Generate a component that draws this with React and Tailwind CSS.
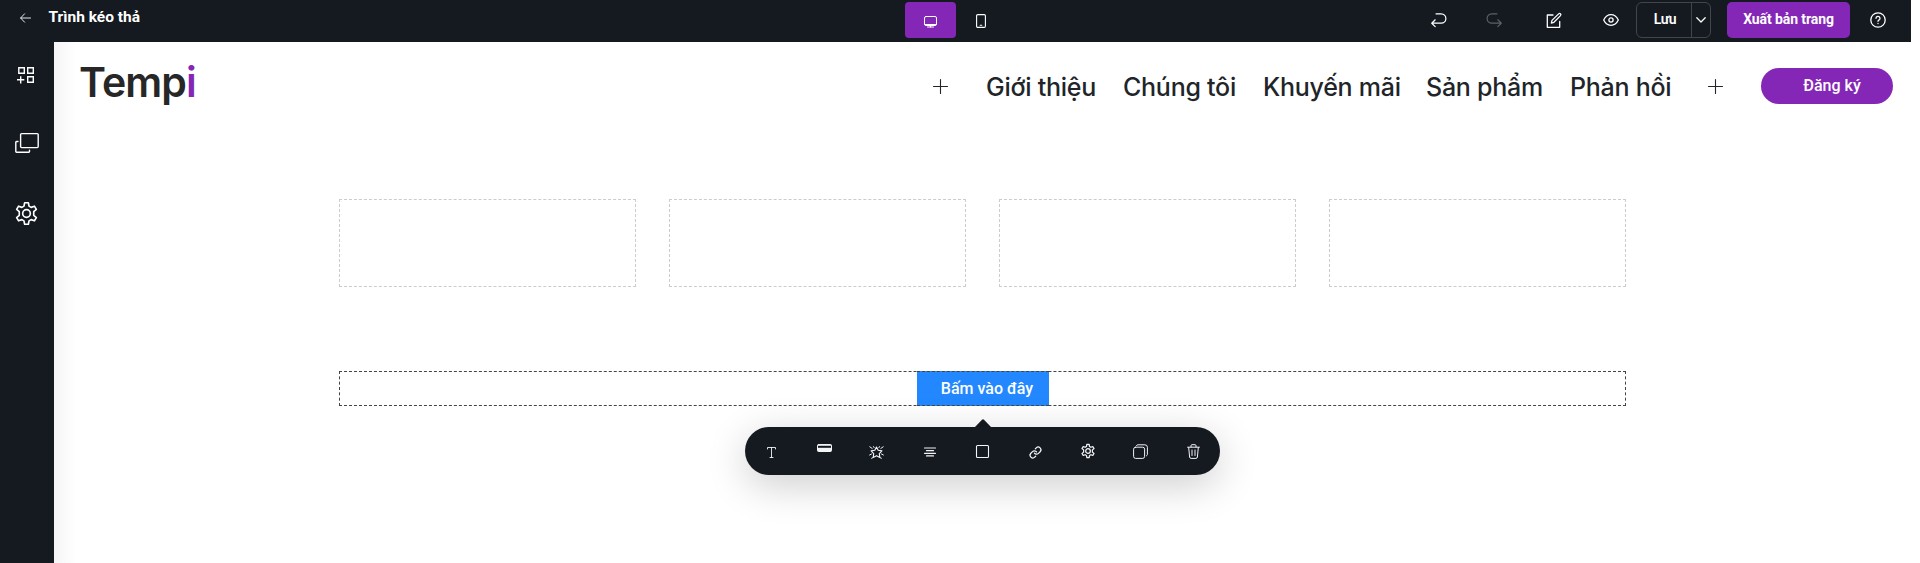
import React from "react";

function Icon({ vb = "0 0 24 24", className = "", sw = 1.5, children }) {
  return (
    <svg
      viewBox={vb}
      className={"shrink-0 overflow-visible " + className}
      fill="none"
      stroke="currentColor"
      strokeWidth={sw}
      strokeLinecap="round"
      strokeLinejoin="round"
    >
      {children}
    </svg>
  );
}

const GEAR =
  "M10.3 2.2h3.4l.6 3.1 1.9 1.1 3-1.1 1.8 3-2.4 2v3.4l2.4 2-1.8 3-3-1.1-1.9 1.1-.6 3.1h-3.4l-.6-3.1-1.9-1.1-3 1.1-1.8-3 2.4-2v-3.4l-2.4-2 1.8-3 3 1.1 1.9-1.1z";

function TopBar() {
  return (
    <header className="flex h-[42px] w-[1911px] items-start bg-[#151920] text-white">
      <div className="flex h-9 w-[905px] items-center pl-5">
        <Icon vb="0 0 11 10" sw={1} className="h-2.5 w-[11px] text-gray-200">
          <path d="M10.5 5H.7M4.6.8.6 5l4 4.2" />
        </Icon>
        <h1 className="ml-[17.5px] mb-0.5 text-[15.5px] leading-5 font-bold whitespace-nowrap">Trình kéo thả</h1>
      </div>
      <div className="mt-0.5 flex w-[526px]">
        <button className="flex h-9 w-[51px] items-center justify-center rounded-sm bg-[#8427b7]">
          <Icon vb="0 0 13 12" sw={1} className="mt-1 h-3 w-[13px]">
            <rect x=".5" y=".5" width="12" height="9" rx="1.5" />
            <path d="M1 8.5h11M3.5 11h6M6.5 9v2" />
          </Icon>
        </button>
        <button className="flex h-9 w-[50px] items-center justify-center">
          <Icon vb="0 0 10 14" sw={1.1} className="mt-[2px] h-[14px] w-2.5">
            <rect x=".6" y=".6" width="8.8" height="12.8" rx="1.2" />
            <path d="M4.2 11.3h1.6" />
          </Icon>
        </button>
      </div>
      <div className="flex h-10 items-center">
        <Icon vb="0 0 16 14" sw={1.2} className="h-[14px] w-4">
          <path d="M5 .8h5.2a4.7 4.7 0 0 1 0 9.4H.8M4.2 6.8.7 10.2l3.5 3.4" />
        </Icon>
        <Icon vb="0 0 16 14" sw={1.2} className="ml-[39px] h-[14px] w-4 text-[#5c6068]">
          <path d="M11 .8H5.8a4.7 4.7 0 0 0 0 9.4h9.4M11.8 6.8l3.5 3.4-3.5 3.4" />
        </Icon>
        <Icon vb="0 0 16 15" sw={1.3} className="ml-[44px] h-[15px] w-4">
          <path d="M7 2H1.3v12.3h12.4V8.5M12.6.9a1.2 1.2 0 0 1 1.9 1.7L7.9 9.3l-2.6.8.7-2.7z" />
        </Icon>
        <Icon vb="0 0 16 12" sw={1.3} className="ml-[41px] h-3 w-4">
          <path d="M.7 6C2.3 2.6 4.9.7 8 .7S13.7 2.6 15.3 6c-1.6 3.4-4.2 5.3-7.3 5.3S2.3 9.4.7 6z" />
          <circle cx="8" cy="6" r="2.1" />
        </Icon>
      </div>
      <div className="mt-0.5 ml-[17px] flex h-9 w-[75px] rounded-md border border-[#444548]">
        <span className="flex w-[55px] items-center justify-center border-r border-[#444548] pr-2 pl-0.5 text-sm font-semibold tracking-tight">
          <span className="-mt-0.5 ml-2">Lưu</span>
        </span>
        <span className="flex flex-1 items-center justify-center">
          <Icon vb="0 0 10 6" sw={1.3} className="h-1.5 w-2.5">
            <path d="M.8.8 5 5 9.2.8" />
          </Icon>
        </span>
      </div>
      <button className="mt-0.5 ml-4 flex h-9 w-[123px] items-center justify-center rounded-[5px] bg-[#8427b7] pb-0.5 text-sm font-bold tracking-[-0.1px] whitespace-nowrap">
        Xuất bản trang
      </button>
      <Icon vb="0 0 16 16" sw={1.3} className="mt-3 ml-[19.5px] h-4 w-4">
        <circle cx="8" cy="8" r="7.2" />
        <path d="M6 6.3a2 2 0 1 1 2.9 1.8c-.6.3-.9.6-.9 1.2M8 11.5v.1" />
      </Icon>
    </header>
  );
}

function SideBar() {
  return (
    <aside className="flex w-[54px] flex-col items-center bg-[#151920] pt-[25px] text-white">
      <Icon vb="0 0 17 17" sw={1.4} className="mr-[3px] h-[17px] w-[17px]">
        <g strokeLinejoin="miter" strokeLinecap="butt">
          <path d="M1.8.7h5.5v5.5H1.8zM10.7.7h5.6v5.5h-5.6zM10.7 9.7h5.6v5.6h-5.6zM0 12.8h7.3M3.7 9.2v7.2" />
        </g>
      </Icon>
      <Icon vb="0 0 24 20" sw={1.4} className="mt-[49px] h-5 w-6">
        <rect x="5.6" y=".6" width="17.6" height="14" rx="1" />
        <path d="M3 8.5H1.5a.7.7 0 0 0-.7.7V18.5a.7.7 0 0 0 .7.7h12.3a.7.7 0 0 0 .7-.7V17.2" />
      </Icon>
      <Icon vb="1.5 1.5 21 21" sw={1.5} className="mt-[49px] mr-px h-[23px] w-[23px]">
        <path d={GEAR} />
        <circle cx="12" cy="12" r="3.5" />
      </Icon>
    </aside>
  );
}

function Plus() {
  return (
    <Icon vb="0 0 15 15" sw={1.1} className="h-[15px] w-[15px] text-[#212529]">
      <path d="M7.5.5v14M.5 7.5h14" />
    </Icon>
  );
}

function SiteHeader() {
  return (
    <div className="flex h-[90px] items-start pl-[25px] text-[#212529]">
      <div className="h-[62px] w-[854px] pt-[14.5px] font-[Inter] text-[41px] leading-[50px] font-semibold tracking-[-0.9px] text-[#272727]">
        Temp<span className="text-[#8427b7]">i</span>
      </div>
      <div className="mt-[26px] flex h-9 items-center">
        <Plus />
        <nav className="mt-0.5 ml-[38px] flex w-[722px] font-[Inter] text-[25px] leading-9 font-medium tracking-[-0.25px] whitespace-nowrap">
          <a className="w-[137px]">Giới thiệu</a>
          <a className="w-[140px]">Chúng tôi</a>
          <a className="w-[163px]">Khuyến mãi</a>
          <a className="w-[144px]">Sản phẩm</a>
          <a>Phản hồi</a>
        </nav>
        <Plus />
        <button className="ml-[38px] h-9 w-[132px] rounded-full bg-[#8427b7] pl-[10px] text-base leading-[34px] font-medium text-white">
          Đăng ký
        </button>
      </div>
    </div>
  );
}

const TOOLS = [
  <Icon vb="0 0 9 11" sw={0.9} className="mt-0.5 h-[11px] w-[9px]">
    <path d="M.5 2V.5h8V2M4.5.5v10M3 10.5h3" />
  </Icon>,
  <Icon vb="0 0 15 8" sw={1} className="-mt-1.5 h-2 w-[15px]">
    <rect x=".5" y=".5" width="14" height="7" rx="1" fill="currentColor" />
    <path d="M1 1.8h13v2H1z" fill="#151920" stroke="none" />
  </Icon>,
  <Icon vb="0 0 15 13" sw={1} className="mt-0.5 h-[13px] w-[15px]">
    <path d="m7.500 1 1.700 3.300 3.700.6-2.600 2.700.5 3.900-3.300-1.800-3.300 1.800.5-3.900-2.600-2.700 3.700-.6z" strokeWidth="1.15" />
    <path d="m.8.800 2.400 1.700M14.200.8l-2.400 1.700M.6 9l1.900-1M14.400 9l-1.900-1M2.800 12.600l.5-1M12.200 12.600l-.5-1M4.500.6l.6 1M10.500.6l-.6 1" />
  </Icon>,
  <Icon vb="0 0 12 10" sw={1.2} className="mt-0.5 h-2.5 w-3">
    <path d="M.5 1h11M2.5 3.7h7M.5 6.3h11M2.5 8.900h7" />
  </Icon>,
  <Icon vb="0 0 13 13" sw={1.1} className="h-[13px] w-[13px]">
    <rect x=".5" y=".5" width="12" height="12" rx="1" />
  </Icon>,
  <Icon vb="0 0 24 24" sw={2.3} className="mt-0.5 h-[13px] w-[13px]">
    <path d="M10 13a5 5 0 0 0 7.54.54l3-3a5 5 0 0 0-7.07-7.07l-1.72 1.71" />
    <path d="M14 11a5 5 0 0 0-7.54-.54l-3 3a5 5 0 0 0 7.07 7.07l1.71-1.71" />
  </Icon>,
  <Icon vb="1.5 1.5 21 21" sw={1.9} className="h-[14px] w-[14px]">
    <path d={GEAR} />
    <circle cx="12" cy="12" r="3.5" />
  </Icon>,
  <Icon vb="0 0 15 15" sw={1} className="h-[15px] w-[15px]">
    <rect x=".6" y="3.2" width="11" height="11.2" rx="2" />
    <path d="M3.5 1.6c.2-.5.7-.8 1.4-.8h7a2.500 2.500 0 0 1 2.500 2.500v7c0 .8-.4 1.300-1 1.500" />
  </Icon>,
  <Icon vb="0 0 13 15" sw={1} className="h-[15px] w-[13px]">
    <path d="M.6 3.2h11.8M4 3V1.7C4 1 4.4.7 5 .7h3c.6 0 1 .3 1 1V3M1.7 3.5l.9 9.5c.1.9.6 1.4 1.5 1.4h4.8c.9 0 1.4-.5 1.5-1.4l.9-9.5M5 6v5.5M8 6v5.5" />
  </Icon>,
];

function FloatingToolbar() {
  return (
    <div className="flex flex-col items-center text-gray-100">
      <svg viewBox="0 0 16 8" className="h-2 w-4">
        <path d="M0 8 7 .8q1-1 2 0L16 8z" fill="#151920" />
      </svg>
      <div className="grid h-12 w-[475px] grid-cols-9 rounded-full bg-[#151920] shadow-[0_10px_40px_rgba(0,0,0,0.2)]">
        {TOOLS.map((tool, i) => (
          <button key={i} className="flex items-center justify-center">
            {tool}
          </button>
        ))}
      </div>
    </div>
  );
}

function Canvas() {
  return (
    <div className="ml-[285px] w-[1287px] pt-[67px]">
      <div className="grid grid-cols-4 gap-[33px]">
        {[0, 1, 2, 3].map((n) => (
          <div key={n} className="h-[88px] border border-dashed border-[#cccccc]" />
        ))}
      </div>
      <div className="mt-[84px] grid h-[35px] justify-center border border-dashed border-[#444444]">
        <button className="-my-px h-[35px] w-[132px] border-y border-dashed border-[#444444] bg-[#2388ff] pl-[9px] text-base leading-[33px] font-medium text-white">
          Bấm vào đây
        </button>
      </div>
      <div className="mt-[13px]">
        <FloatingToolbar />
      </div>
    </div>
  );
}

export default function App() {
  return (
    <div className="flex h-[563px] w-[1920px] flex-col overflow-hidden bg-white font-[Roboto,sans-serif]">
      <TopBar />
      <div className="flex flex-1">
        <SideBar />
        <main className="flex-1 bg-linear-to-r from-[#f5f5f7] to-white to-[22px]">
          <SiteHeader />
          <Canvas />
        </main>
      </div>
    </div>
  );
}
